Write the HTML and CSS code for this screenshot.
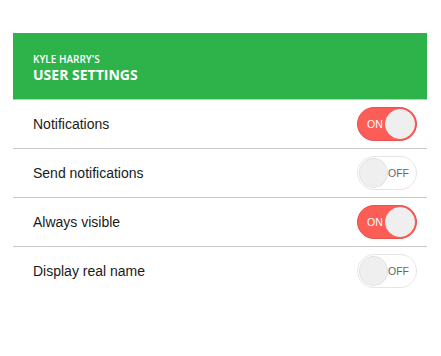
FILE: index.html
```html
<!DOCTYPE html>
<html>
<head>
    <title>User settings</title>
    <link rel="stylesheet" href="styles.css">
</head>
<body>

<div class="settings">
    <div class="settings-header">
        <div class="owner">KYLE HARRY'S</div>
        <div class="title">USER SETTINGS</div>
    </div>
    <ul class="settings-list">
        <li class="setting">
            <span class="label">Notifications</span>
            <span class="toggle on"><span class="toggle-text">ON</span><span class="knob"></span></span>
        </li>
        <li class="setting">
            <span class="label">Send notifications</span>
            <span class="toggle"><span class="knob"></span><span class="toggle-text">OFF</span></span>
        </li>
        <li class="setting">
            <span class="label">Always visible</span>
            <span class="toggle on"><span class="toggle-text">ON</span><span class="knob"></span></span>
        </li>
        <li class="setting">
            <span class="label">Display real name</span>
            <span class="toggle"><span class="knob"></span><span class="toggle-text">OFF</span></span>
        </li>
    </ul>
</div>

</body>
</html>
```

FILE: styles.css
```css
body {
    margin: 0;
    padding: 0;
    background-color: #fff;
    font-family: "Liberation Sans", Arial, sans-serif;
}

.settings {
    margin: 33px 14px 0 13px;
}

/* Шапка */
.settings-header {
    height: 67px;
    box-sizing: border-box;
    background-color: #2db34a;
    border-bottom: 1px solid #c8c8c8;
    color: #fff;
    font-family: "Open Sans", sans-serif;
    padding: 4px 20px 0 20px;
    display: flex;
    flex-direction: column;
    justify-content: center;
}

.owner {
    font-size: 10px;
    font-weight: 600;
    line-height: 13px;
}

.title {
    font-size: 14px;
    font-weight: 700;
    line-height: 17px;
}

/* Список настроек */
.settings-list {
    list-style-type: none;
    margin: 0;
    padding: 0;
}

.setting {
    height: 48px;
    display: flex;
    align-items: center;
    justify-content: space-between;
    padding: 0 10px 0 20px;
    border-bottom: 1px solid #c8c8c8;
}

.setting:last-child {
    border-bottom: none;
}

.label {
    font-size: 14px;
    color: #1a1a1a;
}

/* Переключатель */
.toggle {
    width: 60px;
    height: 34px;
    box-sizing: border-box;
    border-radius: 17px;
    border: 1px solid #e6e6e6;
    background-color: #fff;
    display: flex;
    align-items: center;
    justify-content: space-between;
    padding: 1px;
}

.toggle.on {
    background-color: #fc5d57;
    border-color: #e8524c;
}

.knob {
    width: 30px;
    height: 30px;
    box-sizing: border-box;
    border-radius: 50%;
    background-color: #efefef;
    border: 1px solid #e2e2e2;
}

.toggle.on .knob {
    border-color: #f0f0f0;
}

.toggle-text {
    font-size: 10.5px;
    color: #666;
    padding-right: 6px;
}

.toggle.on .toggle-text {
    color: #fff;
    padding-right: 0;
    padding-left: 8px;
}
```
